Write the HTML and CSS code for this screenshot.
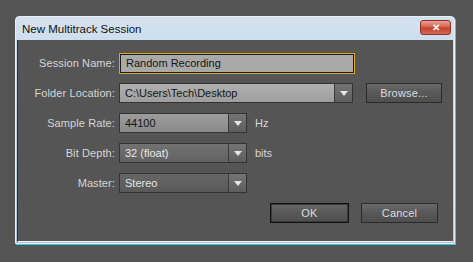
FILE: index.html
```html
<!DOCTYPE html>
<html lang="en">
<head>
    <meta charset="UTF-8">
    <title>New Multitrack Session</title>
    <link rel="stylesheet" href="styles.css">
</head>
<body>
    <div class="window">
        <div class="titlebar">
            <span class="title">New Multitrack Session</span>
            <span class="close">&#x2715;</span>
        </div>
        <div class="panel">
            <div class="row">
                <label class="label">Session Name:</label>
                <div class="input">Random Recording</div>
            </div>
            <div class="row">
                <label class="label">Folder Location:</label>
                <div class="select folder light">
                    <span class="value">C:\Users\Tech\Desktop</span>
                    <span class="arrow"></span>
                </div>
                <span class="btn browse">Browse...</span>
            </div>
            <div class="row">
                <label class="label">Sample Rate:</label>
                <div class="select short mid">
                    <span class="value">44100</span>
                    <span class="arrow"></span>
                </div>
                <span class="unit">Hz</span>
            </div>
            <div class="row">
                <label class="label">Bit Depth:</label>
                <div class="select short dark">
                    <span class="value">32 (float)</span>
                    <span class="arrow"></span>
                </div>
                <span class="unit">bits</span>
            </div>
            <div class="row">
                <label class="label">Master:</label>
                <div class="select short darker">
                    <span class="value">Stereo</span>
                    <span class="arrow"></span>
                </div>
            </div>
            <div class="buttons">
                <span class="btn ok">OK</span>
                <span class="btn cancel">Cancel</span>
            </div>
        </div>
    </div>
</body>
</html>
```

FILE: styles.css
```css
* {
    margin: 0;
    padding: 0;
    box-sizing: border-box;
}
html, body {
    height: 100%;
}
body {
    background: #545454;
    padding: 16px 0 0 15px;
    font-family: "Liberation Sans", Arial, sans-serif;
    font-size: 11px;
}

.window {
    width: 440px;
    height: 228px;
    background: linear-gradient(#d3e1ef, #a9c3df);
    border: 1px solid #e6eef6;
    border-radius: 4px 4px 0 0;
    box-shadow: 1px 1px 0 #3ec8d6;
    padding: 0 1px 1px 1px;
    display: flex;
    flex-direction: column;
}
.titlebar {
    height: 23px;
    display: flex;
    align-items: center;
    justify-content: space-between;
    padding: 0 2px 0 5px;
}
.title {
    font-size: 11.5px;
    color: #111;
}
.close {
    width: 31px;
    height: 15px;
    margin-top: -2px;
    border: 1px solid #8a3226;
    border-radius: 3px;
    background: linear-gradient(#eaa392, #d3624f 45%, #c2412e 55%, #d66a52);
    color: #fff;
    font-size: 10px;
    font-weight: bold;
    text-align: center;
    line-height: 13px;
}

.panel {
    flex: 1;
    background: #555;
    border-left: 1px solid #2e2e2e;
    border-bottom: 1px solid #eef4fa;
    padding: 13px 0 0 9px;
}
.row {
    display: flex;
    align-items: center;
    height: 20px;
    margin-bottom: 10px;
}
.label {
    width: 92px;
    padding-right: 4px;
    text-align: right;
    color: #d6d6d6;
    letter-spacing: 0.1px;
}

.input {
    width: 236px;
    height: 21px;
    background: #a9a9a9;
    border: 1px solid #e0a41e;
    box-shadow: inset 0 0 0 1px #1e1e1e;
    color: #151515;
    padding-left: 6px;
    line-height: 19px;
}

.select {
    display: flex;
    height: 20px;
    border: 1px solid #333;
}
.select.folder {
    width: 234px;
}
.select.short {
    width: 128px;
}
.value {
    flex: 1;
    padding-left: 5px;
    line-height: 18px;
}
.light .value {
    background: linear-gradient(#b0b0b0, #9e9e9e);
    color: #151515;
}
.mid .value {
    background: linear-gradient(#9c9c9c, #8a8a8a);
    color: #151515;
}
.dark .value {
    background: linear-gradient(#727272, #626262);
    color: #e8e8e8;
}
.darker .value {
    background: linear-gradient(#666, #595959);
    color: #e4e4e4;
}
.arrow {
    width: 18px;
    border-left: 1px solid #3a3a3a;
    background: linear-gradient(#747474, #5e5e5e);
    position: relative;
}
.arrow::after {
    content: "";
    position: absolute;
    left: 5px;
    top: 7px;
    border-left: 4px solid transparent;
    border-right: 4px solid transparent;
    border-top: 5px solid #e6e6e6;
}
.unit {
    margin-left: 8px;
    color: #d6d6d6;
}

.btn {
    display: inline-block;
    height: 20px;
    border: 1px solid #2b2b2b;
    background: linear-gradient(#6a6a6a, #575757 50%, #4f4f4f);
    color: #dcdcdc;
    text-align: center;
    line-height: 18px;
    letter-spacing: 0.2px;
}
.browse {
    width: 76px;
    margin-left: 13px;
}
.buttons {
    display: flex;
    justify-content: flex-end;
    gap: 12px;
    padding-right: 15px;
    margin-top: 5px;
}
.ok {
    width: 79px;
    border-color: #111;
    box-shadow: inset 0 0 0 1px #3a3a3a;
}
.cancel {
    width: 77px;
}
```
